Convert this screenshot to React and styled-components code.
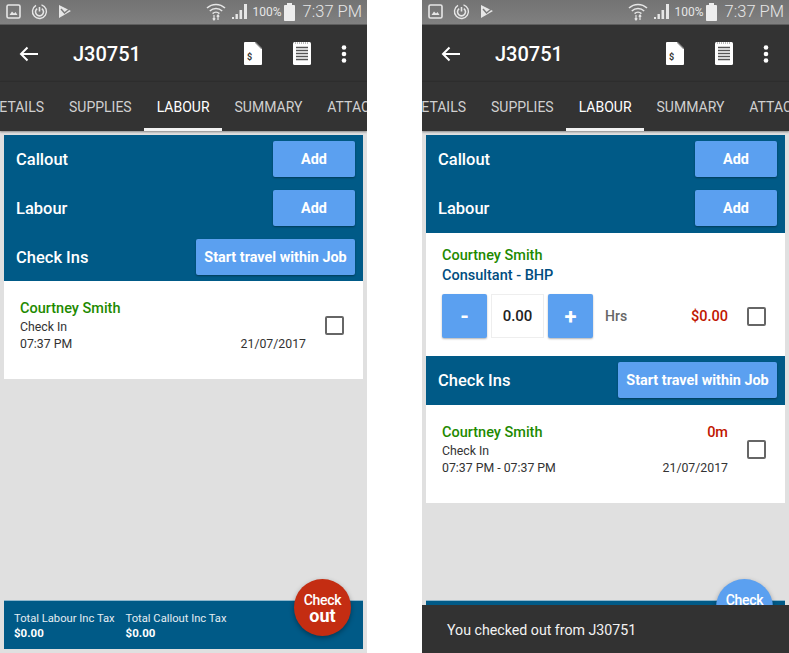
import React from 'react';
import styled, { createGlobalStyle } from 'styled-components';

const GlobalStyle = createGlobalStyle`
  html, body {
    margin: 0;
    padding: 0;
    background: #fff;
  }
  * {
    box-sizing: border-box;
  }
`;

const Page = styled.div`
  display: flex;
  justify-content: space-between;
  width: 789px;
  height: 653px;
  overflow: hidden;
  font-family: Roboto, "Liberation Sans", sans-serif;
`;

const Phone = styled.div`
  position: relative;
  display: flex;
  flex-direction: column;
  width: 367px;
  height: 653px;
  overflow: hidden;
  background: #e0e0e0;
`;

const StatusBar = styled.div`
  display: flex;
  align-items: center;
  height: 25px;
  padding: 0 5px 1px 6px;
  background: linear-gradient(#737373, #808080);
  border-bottom: 1px solid #5e5e5e;
  color: #e6e6e6;
`;

const StatusLeft = styled.div`
  display: flex;
  align-items: center;
  gap: 10px;
`;

const StatusRight = styled.div`
  display: flex;
  align-items: center;
  gap: 6px;
  margin-left: auto;
`;

const BatteryGroup = styled.div`
  display: flex;
  align-items: center;
`;

const Percent = styled.span`
  margin: 0 2px 0 4px;
  font-size: 12px;
`;

const Clock = styled.span`
  margin-left: 8px;
  font-size: 16.5px;
  font-weight: 300;
`;

const AppBar = styled.div`
  display: flex;
  align-items: center;
  height: 56px;
  padding: 1px 0 0 19px;
  background: #333;
  color: #fff;
`;

const Title = styled.h1`
  margin: 0 0 0 34px;
  font-size: 20px;
  font-weight: 500;
`;

const Actions = styled.div`
  display: flex;
  align-items: center;
  margin-left: auto;
  padding-right: 20px;
  gap: 30.5px;
`;

const TabBar = styled.div`
  height: 50px;
  overflow: hidden;
  background: #333;
  border-top: 1px solid #2d2d2d;
  box-shadow: 0 1px 2px rgba(0, 0, 0, 0.4);
`;

const TabTrack = styled.div`
  display: flex;
  height: 100%;
  margin-left: -22.4px;
  white-space: nowrap;
`;

const Tab = styled.div`
  display: flex;
  align-items: center;
  flex-shrink: 0;
  padding: 3px 12.5px 0;
  font-size: 14px;
  color: ${(p) => (p.$active ? '#fff' : '#d0d0d0')};
  border-bottom: 3px solid ${(p) => (p.$active ? '#f2f2f2' : 'transparent')};
`;

const Content = styled.div`
  display: flex;
  flex: 1;
  flex-direction: column;
  padding: 4px;
`;

const BlueBand = styled.div`
  display: flex;
  flex-direction: column;
  gap: 13px;
  padding: 6px 8px ${(p) => (p.$compact ? '6px' : '7px')} 12px;
  background: #005a87;
`;

const BandRow = styled.div`
  display: flex;
  align-items: center;
  justify-content: space-between;
`;

const BandLabel = styled.span`
  font-size: 16.5px;
  font-weight: 500;
  color: #fff;
`;

const BlueButton = styled.button`
  width: ${(p) => (p.$wide ? '159px' : '82px')};
  height: 36px;
  padding: 0;
  border: none;
  border-radius: 2px;
  background: #5ba0f0;
  box-shadow: 0 1px 2px rgba(0, 0, 0, 0.35);
  font-family: inherit;
  font-size: 14.4px;
  font-weight: 700;
  color: #fff;
`;

const CheckInCard = styled.div`
  display: flex;
  align-items: center;
  height: 98px;
  padding: 0 19px 9px 16px;
  background: #fff;
`;

const CheckInText = styled.div`
  flex: 1;
  min-width: 0;
`;

const SpreadRow = styled.div`
  display: flex;
  align-items: center;
  justify-content: space-between;
`;

const Person = styled.div`
  font-size: 14.5px;
  font-weight: 500;
  line-height: 20px;
  color: #1e8a00;
`;

const Role = styled.div`
  font-size: 14.5px;
  font-weight: 500;
  line-height: 19px;
  color: #004d80;
`;

const Detail = styled.div`
  font-size: 12.3px;
  line-height: 17px;
  color: #333;
`;

const RedValue = styled.span`
  font-size: 14.5px;
  font-weight: 500;
  color: #bf1600;
`;

const Checkbox = styled.span`
  flex-shrink: 0;
  width: 19px;
  height: 19px;
  margin-left: 19px;
  border: 2px solid #666;
  border-radius: 2px;
  background: #fff;
`;

const LabourCard = styled.div`
  height: 123px;
  padding: 13px 19px 0 16px;
  background: #fff;
`;

const QtyRow = styled.div`
  display: flex;
  align-items: center;
  margin-top: 9px;
`;

const StepButton = styled.button`
  width: 45px;
  height: 44px;
  padding: 0;
  border: none;
  border-radius: 2px;
  background: #5ba0f0;
  box-shadow: 0 1px 2px rgba(0, 0, 0, 0.3);
  font-family: inherit;
  font-size: 22px;
  font-weight: 700;
  color: #fff;
`;

const QtyValue = styled.div`
  display: flex;
  align-items: center;
  justify-content: center;
  width: 53px;
  height: 44px;
  margin: 0 4px;
  border: 1px solid #eee;
  font-size: 15px;
  font-weight: 500;
  color: #222;
`;

const Hrs = styled.span`
  margin-left: 12px;
  font-size: 14px;
  font-weight: 500;
  color: #666;
`;

const QtyAmount = styled(RedValue)`
  margin-left: auto;
`;

const Footer = styled.div`
  display: flex;
  flex-shrink: 0;
  gap: 11px;
  height: 49px;
  margin-top: auto;
  padding: 10px 10px 0;
  background: #005a87;
  border-top: 1px solid #8fb7cc;
  color: #fff;
`;

const Total = styled.div`
  font-size: 11.2px;
  line-height: 15px;
  color: #e4edf2;
`;

const TotalValue = styled.div`
  font-size: 11.5px;
  font-weight: 700;
  color: #fff;
`;

const Fab = styled.div`
  position: absolute;
  right: 16px;
  bottom: 17px;
  display: flex;
  flex-direction: column;
  align-items: center;
  justify-content: center;
  width: 57px;
  height: 57px;
  border-radius: 50%;
  background: ${(p) => (p.$done ? '#5ba0f0' : '#c42d12')};
  box-shadow: 0 2px 5px rgba(0, 0, 0, 0.35);
  color: #fff;
`;

const FabTop = styled.span`
  font-size: 14px;
  font-weight: 500;
  line-height: 16px;
  letter-spacing: -0.3px;
`;

const FabBottom = styled.span`
  font-size: 18px;
  font-weight: 700;
  line-height: 15px;
`;

const Toast = styled.div`
  position: absolute;
  left: 0;
  right: 0;
  bottom: 0;
  display: flex;
  align-items: center;
  height: 48px;
  padding: 2px 0 0 25px;
  background: #323232;
  font-size: 14.2px;
  color: #f2f2f2;
`;

const PictureIcon = () => (
  <svg width="15" height="15" viewBox="0 0 15 15">
    <rect x="1" y="1" width="13" height="13" rx="1.5" fill="none" stroke="#e6e6e6" strokeWidth="1.6" />
    <path d="M3.5 11 L6 7.5 L8 9.5 L9.5 8 L11.5 11 Z" fill="#e6e6e6" />
  </svg>
);

const SyncIcon = () => (
  <svg width="17" height="17" viewBox="0 0 17 17" fill="none" stroke="#e6e6e6">
    <path d="M5 2.4 A7 7 0 1 0 10.5 1.8" strokeWidth="1.4" />
    <path d="M6.2 5.6 A4 4 0 1 0 10.8 5.6" strokeWidth="1.6" />
    <path d="M8.5 4 V8.5" strokeWidth="1.6" />
  </svg>
);

const PlayIcon = () => (
  <svg width="14" height="15" viewBox="0 0 14 15">
    <path d="M1 1 L13 7 L1 14 Z" fill="#e6e6e6" />
    <path d="M3 5 L6.5 9 L12 4.5" fill="none" stroke="#7a7a7a" strokeWidth="1.5" />
  </svg>
);

const WifiIcon = () => (
  <svg width="20" height="19" viewBox="0 0 20 19" fill="none" stroke="#e6e6e6" strokeWidth="1.5">
    <path d="M1 6 A13 13 0 0 1 19 6" />
    <path d="M3.8 9 A9 9 0 0 1 16.2 9" />
    <path d="M6.6 11.6 A5 5 0 0 1 13.4 11.6" />
    <path d="M8 13 V18 M6.8 16.4 L8 18 L9.2 16.4 M12 18 V13 M10.8 14.6 L12 13 L13.2 14.6" strokeWidth="1.2" />
  </svg>
);

const SignalIcon = () => (
  <svg width="17" height="17" viewBox="0 0 17 17" fill="#e6e6e6">
    <rect x="0" y="14" width="2" height="2" />
    <rect x="3.5" y="11" width="2.4" height="5" />
    <rect x="7.5" y="7" width="2.6" height="9" />
    <rect x="12" y="1" width="3" height="15" />
  </svg>
);

const BatteryIcon = () => (
  <svg width="11" height="18" viewBox="0 0 11 18" fill="#ededed">
    <rect x="3" y="0" width="5" height="2" />
    <rect x="0" y="2" width="11" height="16" rx="0.8" />
  </svg>
);

const BackIcon = () => (
  <svg width="20" height="16" viewBox="0 0 20 16" fill="none" stroke="#fff" strokeWidth="2">
    <path d="M19 8 H2 M8.5 1.5 L2 8 L8.5 14.5" />
  </svg>
);

const InvoiceIcon = () => (
  <svg width="18" height="23" viewBox="0 0 18 23">
    <path d="M0 1 Q0 0 1 0 H11 L18 7 V22 Q18 23 17 23 H1 Q0 23 0 22 Z" fill="#fff" />
    <path d="M11.5 0.5 L17.5 6.5" stroke="#8a8a8a" strokeWidth="1.2" />
    <text x="3" y="18" fontSize="9" fontWeight="700" fill="#333" fontFamily="Roboto, sans-serif">$</text>
  </svg>
);

const NotesIcon = () => (
  <svg width="18" height="23" viewBox="0 0 18 23">
    <rect x="0" y="0" width="18" height="23" rx="1.5" fill="#fff" />
    <path d="M3 5.5 H15 M3 8.5 H15 M3 11.5 H15 M3 14.5 H15 M3 17.5 H15" stroke="#555" strokeWidth="1.3" />
    <path d="M2 1 H16" stroke="#777" strokeWidth="1" strokeDasharray="1 1" />
  </svg>
);

const MoreIcon = () => (
  <svg width="6" height="18" viewBox="0 0 6 18" fill="#fff">
    <circle cx="3" cy="2.5" r="2.3" />
    <circle cx="3" cy="9" r="2.3" />
    <circle cx="3" cy="15.5" r="2.3" />
  </svg>
);

const Chrome = () => (
  <>
    <StatusBar>
      <StatusLeft>
        <PictureIcon />
        <SyncIcon />
        <PlayIcon />
      </StatusLeft>
      <StatusRight>
        <WifiIcon />
        <BatteryGroup>
          <SignalIcon />
          <Percent>100%</Percent>
          <BatteryIcon />
          <Clock>7:37 PM</Clock>
        </BatteryGroup>
      </StatusRight>
    </StatusBar>
    <AppBar>
      <BackIcon />
      <Title>J30751</Title>
      <Actions>
        <InvoiceIcon />
        <NotesIcon />
        <MoreIcon />
      </Actions>
    </AppBar>
    <TabBar>
      <TabTrack>
        {['DETAILS', 'SUPPLIES', 'LABOUR', 'SUMMARY', 'ATTACHMENTS'].map((t) => (
          <Tab key={t} $active={t === 'LABOUR'}>{t}</Tab>
        ))}
      </TabTrack>
    </TabBar>
  </>
);

const Totals = () => (
  <Footer>
    <Total>
      Total Labour Inc Tax
      <TotalValue>$0.00</TotalValue>
    </Total>
    <Total>
      Total Callout Inc Tax
      <TotalValue>$0.00</TotalValue>
    </Total>
  </Footer>
);

const CheckIns = ({ time, duration }) => (
  <CheckInCard>
    <CheckInText>
      <SpreadRow>
        <Person>Courtney Smith</Person>
        {duration && <RedValue>{duration}</RedValue>}
      </SpreadRow>
      <Detail>Check In</Detail>
      <SpreadRow>
        <Detail>{time}</Detail>
        <Detail>21/07/2017</Detail>
      </SpreadRow>
    </CheckInText>
    <Checkbox />
  </CheckInCard>
);

const App = () => {
  return (
    <Page>
      <GlobalStyle />
      <Phone>
        <Chrome />
        <Content>
          <BlueBand $compact>
            <BandRow>
              <BandLabel>Callout</BandLabel>
              <BlueButton>Add</BlueButton>
            </BandRow>
            <BandRow>
              <BandLabel>Labour</BandLabel>
              <BlueButton>Add</BlueButton>
            </BandRow>
            <BandRow>
              <BandLabel>Check Ins</BandLabel>
              <BlueButton $wide>Start travel within Job</BlueButton>
            </BandRow>
          </BlueBand>
          <CheckIns time="07:37 PM" />
          <Totals />
        </Content>
        <Fab>
          <FabTop>Check</FabTop>
          <FabBottom>out</FabBottom>
        </Fab>
      </Phone>

      <Phone>
        <Chrome />
        <Content>
          <BlueBand>
            <BandRow>
              <BandLabel>Callout</BandLabel>
              <BlueButton>Add</BlueButton>
            </BandRow>
            <BandRow>
              <BandLabel>Labour</BandLabel>
              <BlueButton>Add</BlueButton>
            </BandRow>
          </BlueBand>
          <LabourCard>
            <Person>Courtney Smith</Person>
            <Role>Consultant - BHP</Role>
            <QtyRow>
              <StepButton>-</StepButton>
              <QtyValue>0.00</QtyValue>
              <StepButton>+</StepButton>
              <Hrs>Hrs</Hrs>
              <QtyAmount>$0.00</QtyAmount>
              <Checkbox />
            </QtyRow>
          </LabourCard>
          <BlueBand>
            <BandRow>
              <BandLabel>Check Ins</BandLabel>
              <BlueButton $wide>Start travel within Job</BlueButton>
            </BandRow>
          </BlueBand>
          <CheckIns time="07:37 PM - 07:37 PM" duration="0m" />
          <Totals />
        </Content>
        <Fab $done>
          <FabTop>Check</FabTop>
          <FabBottom>out</FabBottom>
        </Fab>
        <Toast>You checked out from J30751</Toast>
      </Phone>
    </Page>
  );
};

export default App;
